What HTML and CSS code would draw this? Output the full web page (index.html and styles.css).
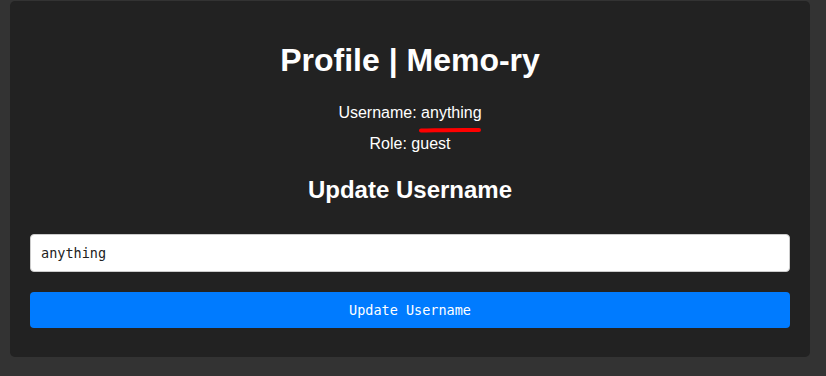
FILE: index.html
```html
<!DOCTYPE html>
<html lang="en">
<head>
  <meta charset="UTF-8" />
  <meta name="viewport" content="width=device-width, initial-scale=1.0" />
  <title>Profile | Memo-ry</title>
  <link rel="stylesheet" href="styles.css">
</head>
<body>
  <main class="card">
    <h1>Profile | Memo-ry</h1>
    <p class="info">Username: <span class="marked">anything<svg class="scribble" viewBox="0 0 64 8" aria-hidden="true"><path d="M3 4.4 C 20 4.2, 40 3.6, 61 4" /></svg></span></p>
    <p class="info">Role: guest</p>
    <h2>Update Username</h2>
    <form class="update-form">
      <input type="text" class="field" value="anything" />
      <button type="button" class="btn">Update Username</button>
    </form>
  </main>
</body>
</html>
```

FILE: styles.css
```css
* { box-sizing: border-box; }

html, body {
  margin: 0;
  background: #333333;
  font-family: "Liberation Sans", Arial, sans-serif;
  color: #ffffff;
}

body { padding: 1px 16px 0 10px; }

.card {
  background: #222222;
  border-radius: 5px;
  padding: 20px 20px 29px;
  text-align: center;
}

h1 {
  font-size: 32px;
  margin: 21px 0 25px;
}

.info {
  font-size: 16px;
  margin: 0 0 13px;
}

.marked { position: relative; }

.scribble {
  position: absolute;
  left: -3px; top: 22px;
  width: 64px; height: 8px;
  fill: none;
  stroke: #ff0000;
  stroke-width: 4;
  stroke-linecap: round;
}

h2 {
  font-size: 24px;
  margin: 23px 0 30px;
}

.update-form {
  display: flex;
  flex-direction: column;
  gap: 20px;
}

.field {
  height: 38px;
  padding: 0 10px;
  border: 1px solid #cccccc;
  border-radius: 4px;
  background: #ffffff;
  color: #222222;
  font-family: "DejaVu Sans Mono", monospace;
  font-size: 13.5px;
}

.btn {
  height: 36px;
  border: none;
  border-radius: 4px;
  background: #007bff;
  color: #ffffff;
  font-family: "DejaVu Sans Mono", monospace;
  font-size: 13.5px;
}
```
